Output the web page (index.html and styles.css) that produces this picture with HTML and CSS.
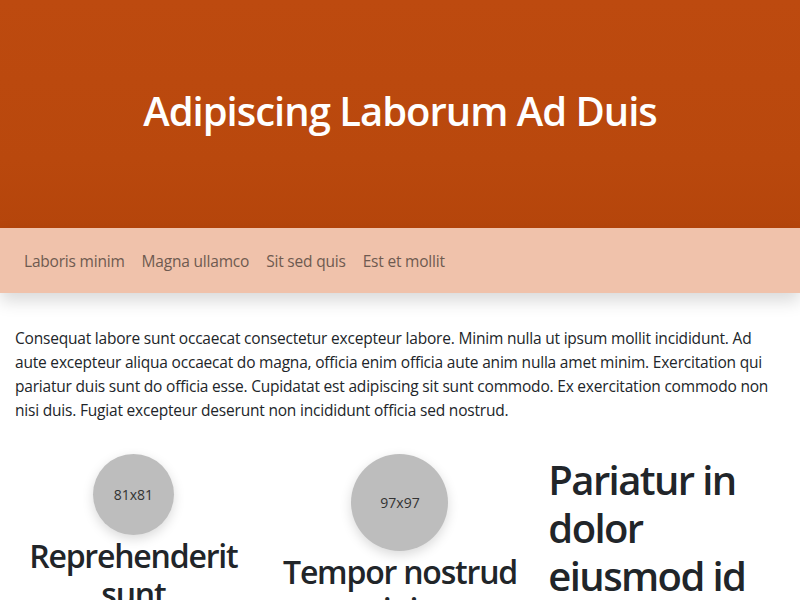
FILE: index.html
```html
<!DOCTYPE html>
<html lang="la">
<head>
<meta charset="utf-8">
<title>Adipiscing Laborum Ad Duis</title>
<link rel="stylesheet" href="styles.css">
</head>
<body>
<header class="hero">
  <h1 class="hero-title">Adipiscing Laborum Ad Duis</h1>
</header>
<nav class="nav">
  <a class="nav-link" href="#">Laboris minim</a>
  <a class="nav-link" href="#">Magna ullamco</a>
  <a class="nav-link" href="#">Sit sed quis</a>
  <a class="nav-link" href="#">Est et mollit</a>
</nav>
<main class="main">
  <p class="lead">Consequat labore sunt occaecat consectetur excepteur labore. Minim nulla ut ipsum mollit incididunt. Ad aute excepteur aliqua occaecat do magna, officia enim officia aute anim nulla amet minim. Exercitation qui pariatur duis sunt do officia esse. Cupidatat est adipiscing sit sunt commodo. Ex exercitation commodo non nisi duis. Fugiat excepteur deserunt non incididunt officia sed nostrud.</p>
  <div class="cols">
    <section class="col col-center">
      <div class="avatar avatar-81">81x81</div>
      <h2 class="col-title">Reprehenderit sunt</h2>
    </section>
    <section class="col col-center">
      <div class="avatar avatar-97">97x97</div>
      <h2 class="col-title">Tempor nostrud minim</h2>
    </section>
    <section class="col">
      <h2 class="col-big">Pariatur in dolor eiusmod id</h2>
    </section>
  </div>
</main>
</body>
</html>
```

FILE: styles.css
```css
* { box-sizing: border-box; }
html, body { margin: 0; padding: 0; }
body {
  font-family: "Open Sans", "Noto Sans", sans-serif;
  color: #212529;
  background: #fff;
  font-size: 15.5px;
  letter-spacing: -0.2px;
  line-height: 24px;
}
.hero {
  height: 228px;
  background: linear-gradient(180deg, #bd4a0f 0%, #b9480d 70%, #b5450b 100%);
  display: flex;
  align-items: center;
  justify-content: center;
}
.hero-title {
  margin: 0 0 6px;
  color: #fff;
  font-size: 40px;
  font-weight: 600;
  letter-spacing: -1px;
  line-height: 48px;
}
.nav {
  height: 65px;
  background: #f0c2ab;
  display: flex;
  align-items: center;
  padding: 0 16px;
  box-shadow: 0 8px 16px rgba(0,0,0,.15);
  position: relative;
}
.nav-link {
  color: #6e5a50;
  text-decoration: none;
  padding: 8px 8.5px;
  letter-spacing: -0.2px;
}
.nav-link:first-child { margin-left: -0.5px; }
.main {
  padding: 33px 15px 0;
}
.lead {
  margin: 0 0 16px;
}
.cols {
  display: grid;
  grid-template-columns: repeat(3, 1fr);
  column-gap: 30px;
  padding-top: 16px;
}
.col-center { text-align: center; display: flex; flex-direction: column; align-items: center; }
.avatar {
  border-radius: 50%;
  background: #bdbdbd;
  color: #333;
  font-size: 14px;
  letter-spacing: 0;
  display: flex;
  align-items: center;
  justify-content: center;
  box-shadow: 0 4px 12px rgba(0,0,0,.15);
}
.avatar-81 { width: 81px; height: 81px; }
.avatar-97 { width: 97px; height: 97px; }
.col-title {
  margin: 2px 0 0;
  font-size: 32px;
  font-weight: 600;
  letter-spacing: -1.2px;
  line-height: 38.4px;
}
.col-big {
  margin: 2px 0 0;
  font-size: 40px;
  font-weight: 600;
  letter-spacing: -1.6px;
  line-height: 48px;
}
```
